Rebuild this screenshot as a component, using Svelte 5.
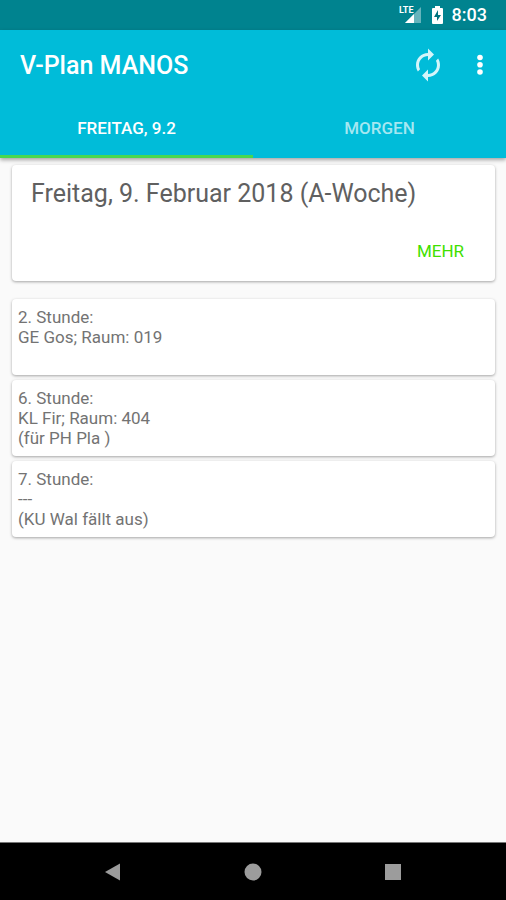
<script>
  let activeTab = 0;
  const tabs = ['Freitag, 9.2', 'Morgen'];

  const lessons = [
    { hour: 2, subject: 'GE Gos; Raum: 019', info: '' },
    { hour: 6, subject: 'KL Fir; Raum: 404', info: '(für PH Pla )' },
    { hour: 7, subject: '---', info: '(KU Wal fällt aus)' }
  ];
</script>

<style>
  :global(body) {
    background: #fafafa;
    font-family: Roboto, 'Liberation Sans', sans-serif;
  }

  .app {
    display: flex;
    flex-direction: column;
    min-height: 100vh;
    color: #737373;
  }

  button {
    padding: 0;
    border: none;
    background: none;
    color: inherit;
    font-family: inherit;
    cursor: pointer;
  }

  svg {
    display: block;
  }

  .status {
    display: flex;
    align-items: center;
    justify-content: flex-end;
    height: 30px;
    padding-right: 19px;
    background: #00838f;
    color: #fff;
    font-size: 18px;
    font-weight: 500;
  }

  .status time {
    margin-left: 9px;
    line-height: 32px;
  }

  .signal text {
    font-size: 9px;
    font-weight: 700;
  }

  .battery {
    margin-left: 10px;
  }

  header {
    background: #00bcd9;
    color: #fff;
    box-shadow: 0 2px 4px rgba(0, 0, 0, 0.35);
  }

  .toolbar {
    display: flex;
    align-items: center;
    height: 70px;
    padding: 0 11px 0 20px;
  }

  h1 {
    flex: 1;
    margin: 0;
    font-size: 25px;
    font-weight: 500;
  }

  .toolbar button {
    color: #d4f5fa;
  }

  .toolbar .more {
    margin-left: 19px;
    color: #fff;
  }

  .tabs {
    display: flex;
  }

  .tabs button {
    flex: 1;
    height: 58px;
    border-bottom: 3px solid transparent;
    color: #a5e7f1;
    font-size: 17px;
    font-weight: 500;
    text-transform: uppercase;
  }

  .tabs button.active {
    border-bottom-color: #46d84f;
    color: #fff;
  }

  main {
    flex: 1;
    padding: 7px 11px 20px 12px;
  }

  .card {
    border-radius: 4px;
    background: #fff;
    box-shadow: 0 1px 3px rgba(0, 0, 0, 0.35);
  }

  .day {
    display: flex;
    flex-direction: column;
    align-items: flex-start;
    justify-content: space-between;
    height: 116px;
    margin-bottom: 18px;
    padding: 13px 31px 18px 19px;
    box-sizing: border-box;
  }

  h2 {
    margin: 0;
    color: #606060;
    font-size: 25px;
    font-weight: 400;
    line-height: 32px;
  }

  .day button {
    align-self: flex-end;
    color: #3fe000;
    font-size: 17px;
    line-height: 24px;
  }

  .lessons {
    display: flex;
    flex-direction: column;
    gap: 5px;
    margin: 0;
    padding: 0;
    list-style: none;
  }

  .lessons li {
    min-height: 76px;
    padding: 8px 6px;
    box-sizing: border-box;
    font-size: 17px;
    line-height: 20px;
  }

  nav {
    display: flex;
    justify-content: center;
    gap: 116px;
    height: 58px;
    border-top: 1px solid #777;
    box-sizing: border-box;
    background: #000;
    color: #9c9c9c;
  }
</style>

<div class="app">
  <div class="status">
    <svg class="signal" width="23" height="20" viewBox="0 0 23 20" fill="#fff">
      <path d="M22 2v16H6z" opacity="0.4" />
      <path d="M15 9v9H6z" />
      <text x="0" y="8">LTE</text>
    </svg>
    <svg class="battery" width="11" height="20" viewBox="0 0 11 20">
      <path
        d="M3 1h5v2h2q1 0 1 1v14q0 1-1 1H1q-1 0-1-1V4q0-1 1-1h2z"
        fill="#fff"
      />
      <path d="M6 5 2 12h3v4l4-6H6z" fill="#00737e" />
    </svg>
    <time>8:03</time>
  </div>

  <header>
    <div class="toolbar">
      <h1>V-Plan MANOS</h1>
      <button aria-label="Aktualisieren">
        <svg width="36" height="36" viewBox="0 0 24 24" fill="currentColor">
          <path
            d="M12 6v3l4-4-4-4v3c-4.42 0-8 3.58-8 8 0 1.57.46 3.03 1.24 4.26L6.7 14.8c-.45-.83-.7-1.79-.7-2.8 0-3.31 2.69-6 6-6zm6.76 1.74L17.3 9.2c.44.84.7 1.79.7 2.8 0 3.31-2.69 6-6 6v-3l-4 4 4 4v-3c4.42 0 8-3.58 8-8 0-1.57-.46-3.03-1.24-4.26z"
          />
        </svg>
      </button>
      <button class="more" aria-label="Mehr Optionen">
        <svg width="30" height="30" viewBox="0 0 30 30" fill="currentColor">
          <circle cx="15" cy="7.5" r="2.8" />
          <circle cx="15" cy="14.8" r="2.8" />
          <circle cx="15" cy="22" r="2.8" />
        </svg>
      </button>
    </div>
    <div class="tabs" role="tablist">
      {#each tabs as tab, i}
        <button
          role="tab"
          aria-selected={activeTab === i}
          class:active={activeTab === i}
          on:click={() => (activeTab = i)}>{tab}</button
        >
      {/each}
    </div>
  </header>

  <main>
    <section class="card day">
      <h2>Freitag, 9. Februar 2018 (A-Woche)</h2>
      <button>MEHR</button>
    </section>
    <ul class="lessons">
      {#each lessons as lesson}
        <li class="card">
          <div>{lesson.hour}. Stunde:</div>
          <div>{lesson.subject}</div>
          <div>{lesson.info}</div>
        </li>
      {/each}
    </ul>
  </main>

  <nav>
    <button aria-label="Zurück">
      <svg width="24" height="24" viewBox="0 0 24 24" fill="currentColor">
        <path d="M19 3.5v17L4 12z" />
      </svg>
    </button>
    <button aria-label="Startseite">
      <svg width="24" height="24" viewBox="0 0 24 24" fill="currentColor">
        <circle cx="12" cy="12" r="8.5" />
      </svg>
    </button>
    <button aria-label="Letzte Apps">
      <svg width="24" height="24" viewBox="0 0 24 24" fill="currentColor">
        <path d="M4 4h16v16H4z" />
      </svg>
    </button>
  </nav>
</div>
